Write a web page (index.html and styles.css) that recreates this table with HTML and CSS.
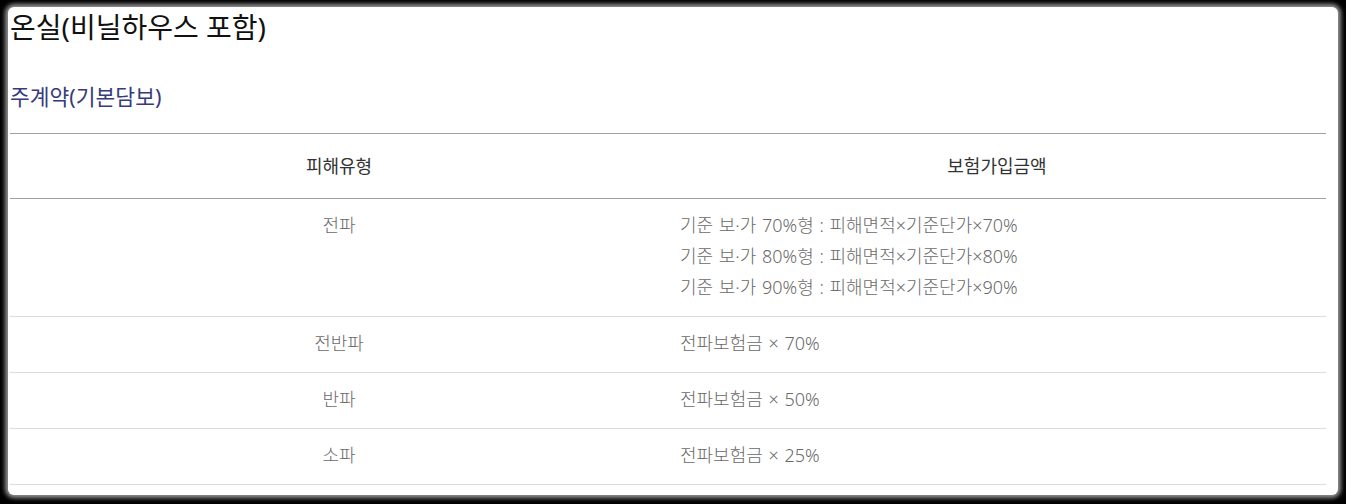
FILE: index.html
```html
<!DOCTYPE html>
<html lang="ko">
  <head>
    <meta charset="UTF-8" />
    <meta name="viewport" content="width=device-width, initial-scale=1.0" />
    <title>온실(비닐하우스 포함)</title>
    <link rel="stylesheet" href="styles.css">
  </head>
  <body>
    <div class="frame">
      <h1 class="title">온실(비닐하우스 포함)</h1>
      <h2 class="subtitle">주계약(기본담보)</h2>

      <table class="coverage">
        <thead>
          <tr>
            <th>피해유형</th>
            <th>보험가입금액</th>
          </tr>
        </thead>
        <tbody>
          <tr>
            <td class="type">전파</td>
            <td class="amount">
              기준 보·가 70%형 : 피해면적×기준단가×70%<br>
              기준 보·가 80%형 : 피해면적×기준단가×80%<br>
              기준 보·가 90%형 : 피해면적×기준단가×90%
            </td>
          </tr>
          <tr>
            <td class="type">전반파</td>
            <td class="amount">전파보험금 × 70%</td>
          </tr>
          <tr>
            <td class="type">반파</td>
            <td class="amount">전파보험금 × 50%</td>
          </tr>
          <tr>
            <td class="type">소파</td>
            <td class="amount">전파보험금 × 25%</td>
          </tr>
        </tbody>
      </table>
    </div>
  </body>
</html>
```

FILE: styles.css
```css
html,
body {
  margin: 0;
  height: 504px;
  background: #000;
  overflow: hidden;
}
body {
  font-family: "Noto Sans", "Noto Sans CJK KR", sans-serif;
  padding: 7px 8px 9px 8px;
  box-sizing: border-box;
}
.frame {
  background: #fff;
  height: 488px;
  border-radius: 6px;
  padding: 4px 12px 0 2px;
  box-sizing: border-box;
  box-shadow: 0 0 4px 3px rgba(185, 185, 185, 0.8);
}
.title {
  margin: 0;
  font-size: 28px;
  font-weight: 400;
  line-height: 32px;
  color: #111;
}
.subtitle {
  margin: 40px 0 0;
  font-size: 21.5px;
  font-weight: 400;
  line-height: 28px;
  color: #363b7c;
}
.coverage {
  margin-top: 22px;
  width: 100%;
  border-collapse: collapse;
  table-layout: fixed;
}
.coverage th {
  width: 50%;
  font-size: 18px;
  font-weight: 400;
  line-height: 24px;
  color: #333;
  padding: 20px 10px;
  border-top: 1px solid #a0a0a0;
  border-bottom: 1px solid #a0a0a0;
}
.coverage td {
  font-size: 18px;
  font-weight: 300;
  line-height: 31px;
  color: #6a6a6a;
  padding: 11px 10px 13px;
  border-bottom: 1px solid #dcdcdc;
  vertical-align: top;
}
.coverage .type {
  text-align: center;
}
.coverage .amount {
  text-align: left;
  padding-left: 12px;
  word-spacing: 1px;
}
```
